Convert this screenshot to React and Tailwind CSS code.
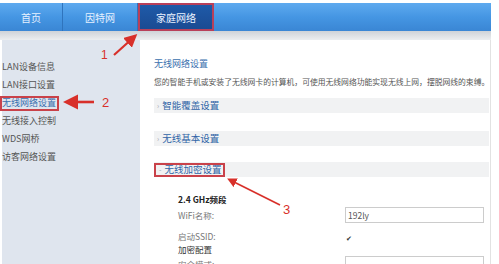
import React from 'react';

const SIDE = ['LAN设备信息', 'LAN接口设置', '无线网络设置', '无线接入控制', 'WDS网桥', '访客网络设置'];

function Band({ label, boxed, mt }) {
  return (
    <div className={`h-[15px] bg-[#f1f2f3] flex items-center ${mt}`}>
      <span className={`flex items-center h-[14px] pl-[3px] pr-[2px] ${boxed ? 'border-2 border-[#c9424a]' : ''}`}>
        <span className="text-[#9aa3ad] text-[7px] mr-[3px]">{boxed ? '-' : '›'}</span>
        <span className="text-[#2f64a6] text-[9.5px] leading-none">{label}</span>
      </span>
    </div>
  );
}

export default function App() {
  return (
    <div className="relative w-[499px] h-[264px] overflow-hidden bg-white font-['Noto_Sans_CJK_SC','Noto_Sans',sans-serif]">
      {/* nav */}
      <div className="w-[491px] pt-[3px]">
        <div className="h-[28px] flex bg-gradient-to-b from-[#5eaaef] via-[#4596e3] to-[#3a86d4] text-white text-[10px]">
          <div className="w-[63px] flex items-center justify-center border-r border-[#2f74bd] text-[#e6f1ff]">首页</div>
          <div className="w-[75px] flex items-center justify-center border-r border-[#2f74bd] text-[#e6f1ff]">因特网</div>
          <div className="w-[76px] flex items-center justify-center bg-gradient-to-b from-[#1f5aa8] to-[#1a4b93] border-2 border-[#b8405a] text-[#eaf2ff]">家庭网络</div>
        </div>
        <div className="h-[9px] bg-gradient-to-b from-[#cfd3d8] to-[#eceef0]" />
      </div>

      <div className="flex h-[224px]">
        {/* sidebar */}
        <div className="w-[138px] ml-[2px] bg-[#dfe5ee] pt-[18px] text-[9px] text-[#555] leading-[18px]">
          {SIDE.map((s) => (
            <div key={s} className="h-[18px] flex items-center">
              {s === '无线网络设置' ? (
                <span className="border-2 border-[#c9424a] text-[#3a6fae] h-[15px] flex items-center pr-[1px] -ml-[2px]">{s}</span>
              ) : (
                <span>{s}</span>
              )}
            </div>
          ))}
        </div>

        {/* content */}
        <div className="w-[351px] pl-[14px] pr-[1px] border-r border-[#e2e2e2]">
          <div className="mt-[18px] text-[9px] text-[#3a6fae] leading-[12px]">无线网络设置</div>
          <div className="mt-[7px] text-[7.8px] text-[#555] leading-[10px] whitespace-nowrap">您的智能手机或安装了无线网卡的计算机，可使用无线网络功能实现无线上网，摆脱网线的束缚。</div>
          <Band label="智能覆盖设置" mt="mt-[11px]" />
          <Band label="无线基本设置" mt="mt-[18px]" />
          <Band label="无线加密设置" mt="mt-[16px]" boxed />

          <div className="pl-[24px] mt-[16px] text-[8.5px]">
            <div className="font-bold text-[#222] leading-[12px]">2.4 GHz频段</div>
            <div className="flex items-center mt-[1px] h-[18px]">
              <span className="w-[167px] text-[#777]">WiFi名称:</span>
              <div className="w-[139px] h-[16px] border border-[#ccc] flex items-center pl-[2px] text-[#555]">192ly</div>
            </div>
            <div className="flex items-center mt-[6px] h-[13px]">
              <span className="w-[167px] text-[#777]">启动SSID:</span>
              <span className="text-[7px] text-[#333] ml-[1px] mt-[4px]">✔</span>
            </div>
            <div className="text-[#333] leading-[11px] mt-[1px]">加密配置</div>
            <div className="flex items-center mt-[2px] h-[14px]">
              <span className="w-[167px] text-[#777]">安全模式:</span>
              <div className="w-[139px] h-[16px] border border-[#ccc]" />
            </div>
          </div>
        </div>
      </div>

      {/* annotations */}
      <svg className="absolute inset-0 pointer-events-none" width="499" height="264">
        <defs>
          <marker id="ah" markerWidth="6" markerHeight="6" refX="4" refY="3" orient="auto">
            <path d="M0,0 L6,3 L0,6 Z" fill="#d8302a" />
          </marker>
        </defs>
        <line x1="114" y1="55" x2="134" y2="37" stroke="#d8302a" strokeWidth="2.2" markerEnd="url(#ah)" />
        <line x1="94" y1="102" x2="68" y2="102" stroke="#d8302a" strokeWidth="2.6" markerEnd="url(#ah)" />
        <line x1="280" y1="205" x2="230" y2="180" stroke="#d8302a" strokeWidth="1.6" markerEnd="url(#ah)" />
      </svg>
      <span className="absolute left-[101px] top-[49px] text-[12px] text-[#d8302a] font-['Liberation_Sans',sans-serif] leading-none">1</span>
      <span className="absolute left-[102px] top-[96px] text-[13px] text-[#d8302a] font-['Liberation_Sans',sans-serif] leading-none">2</span>
      <span className="absolute left-[283px] top-[203px] text-[13px] text-[#d8302a] font-['Liberation_Sans',sans-serif] leading-none">3</span>
    </div>
  );
}
